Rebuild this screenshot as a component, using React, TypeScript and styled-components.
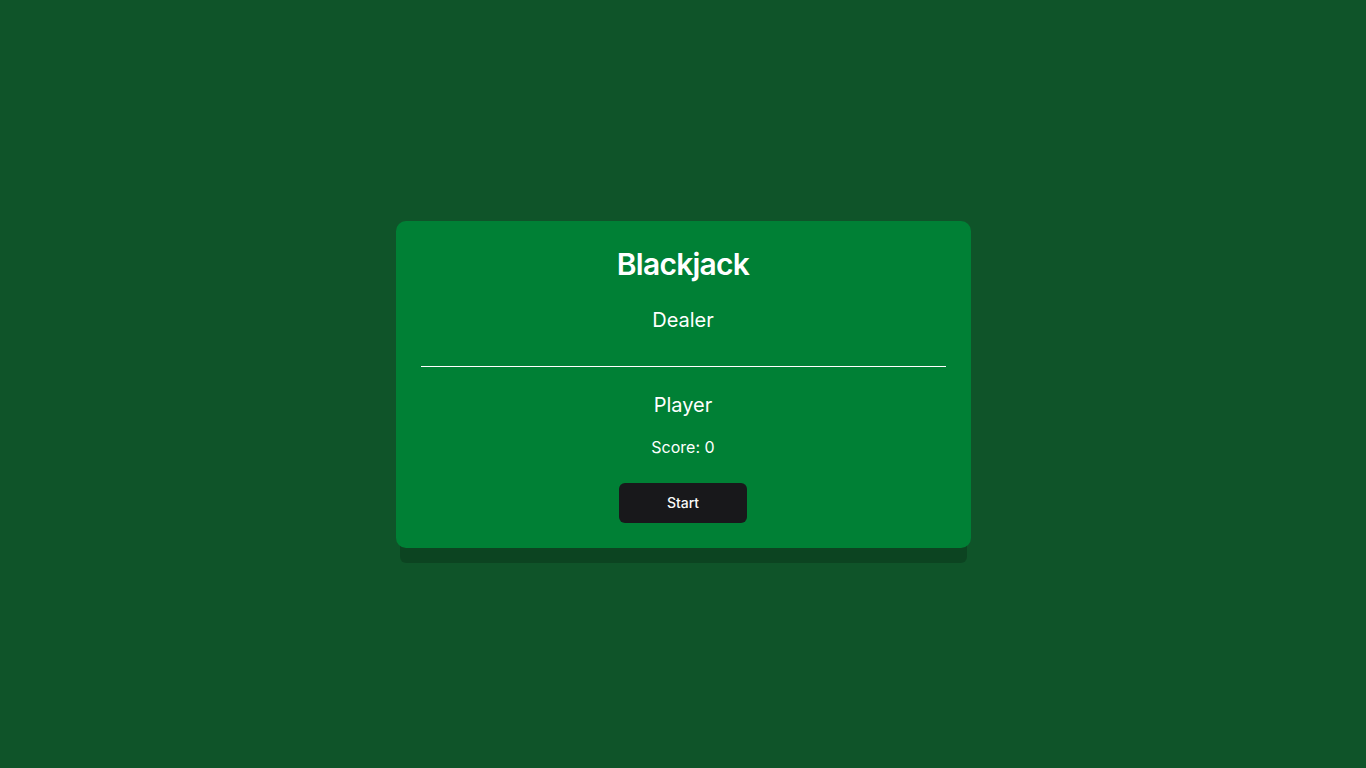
import React from "react";
import styled, { createGlobalStyle } from "styled-components";

const Global = createGlobalStyle`
  html, body { margin: 0; padding: 0; }
  body {
    background: #0f5429;
    font-family: Inter, "Noto Sans", sans-serif;
    color: #ffffff;
  }
`;

const Page = styled.div`
  min-height: 100vh;
  display: flex;
  align-items: center;
  justify-content: center;
`;

const Card = styled.div`
  width: 575px;
  box-sizing: border-box;
  background: #008035;
  border-radius: 10px;
  padding: 25px 25px 25px;
  box-shadow: 0 19px 0 -4px rgba(0, 0, 0, 0.18);
  display: flex;
  flex-direction: column;
  align-items: center;
`;

const Title = styled.h1`
  margin: 0;
  font-size: 30px;
  line-height: 36px;
  font-weight: 600;
  letter-spacing: -0.75px;
`;

const Section = styled.section<{ $top: number }>`
  width: 100%;
  margin-top: ${(p) => p.$top}px;
  display: flex;
  flex-direction: column;
  align-items: center;
`;

const SectionTitle = styled.h2`
  margin: 0;
  font-size: 20px;
  line-height: 28px;
  font-weight: 400;
`;

const Hand = styled.div<{ $h: number }>`
  height: ${(p) => p.$h}px;
  display: flex;
  gap: 8px;
`;

const Divider = styled.hr`
  width: 100%;
  margin: 12px 0 0;
  border: none;
  border-top: 1px solid #ffffff;
`;

const Score = styled.p`
  margin: 0;
  font-size: 16px;
  line-height: 24px;
`;

const Actions = styled.div`
  margin-top: 24px;
  display: flex;
  justify-content: center;
`;

const Button = styled.button`
  width: 128px;
  height: 40px;
  border: none;
  border-radius: 6px;
  background: #18181b;
  color: #fafafa;
  font-family: Inter, sans-serif;
  font-size: 14px;
  font-weight: 500;
  cursor: pointer;
`;

export default function App() {
  return (
    <>
      <Global />
      <Page>
        <Card>
          <Title>Blackjack</Title>
          <Section $top={24}>
            <SectionTitle>Dealer</SectionTitle>
            <Hand $h={20} />
          </Section>
          <Divider />
          <Section $top={24}>
            <SectionTitle>Player</SectionTitle>
            <Hand $h={16} />
            <Score>Score: 0</Score>
          </Section>
          <Actions>
            <Button>Start</Button>
          </Actions>
        </Card>
      </Page>
    </>
  );
}
